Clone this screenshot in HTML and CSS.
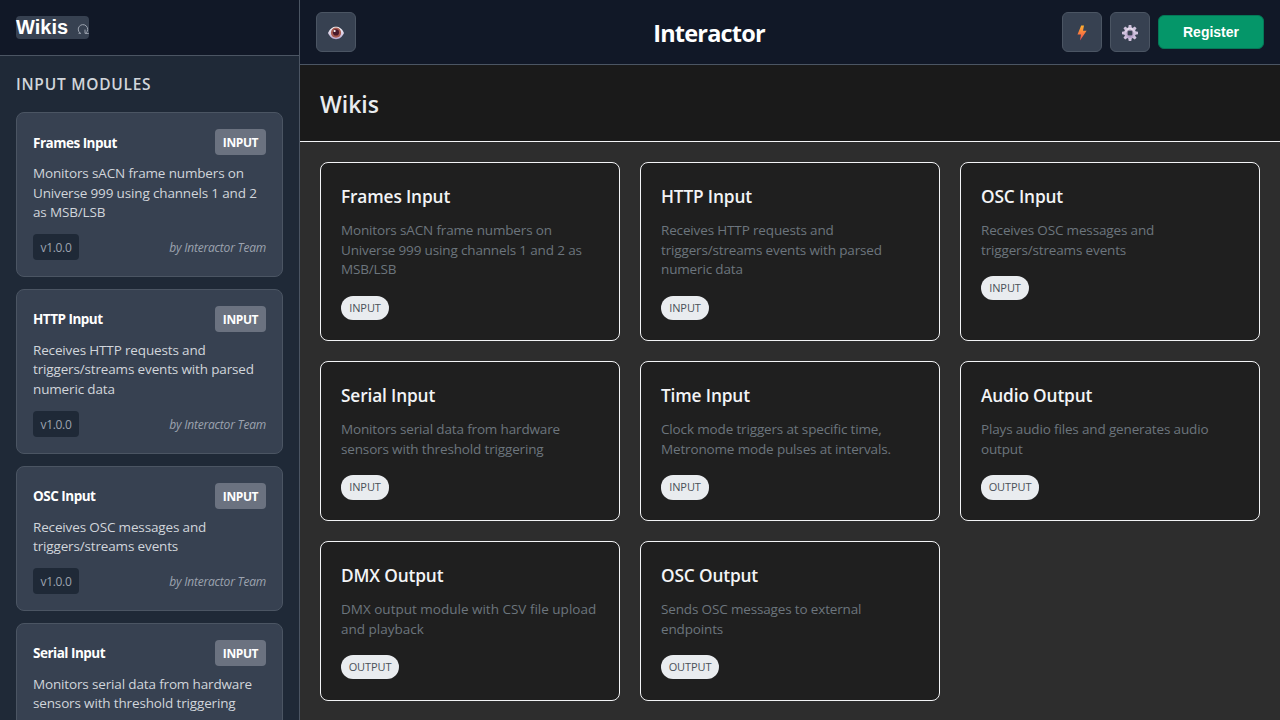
FILE: index.html
```html
<!DOCTYPE html>
<html lang="en">
<head>
<meta charset="utf-8">
<title>Interactor</title>
<link rel="stylesheet" href="styles.css">
</head>
<body>
<div class="app">
  <aside class="sidebar">
    <div class="sidebar-header">
      <button class="wiki-toggle">Wikis <svg class="reload" viewBox="0 0 12 12"><path d="M4 10.3H1.500M3.300 10.200A4.700 4.700 0 1 1 9 9.900M8 6.600V10.400H11.800"/></svg></button>
    </div>
    <div class="module-list">
      <h3 class="section-title">Input Modules</h3>
      <article class="module">
        <div class="module-top"><h4 class="module-name">Frames Input</h4><span class="module-type">INPUT</span></div>
        <p class="module-desc">Monitors sACN frame numbers on<br>Universe 999 using channels 1 and 2<br>as MSB/LSB</p>
        <div class="module-meta"><span class="version">v1.0.0</span><span class="author">by Interactor Team</span></div>
      </article>
      <article class="module">
        <div class="module-top"><h4 class="module-name">HTTP Input</h4><span class="module-type">INPUT</span></div>
        <p class="module-desc">Receives HTTP requests and<br>triggers/streams events with parsed<br>numeric data</p>
        <div class="module-meta"><span class="version">v1.0.0</span><span class="author">by Interactor Team</span></div>
      </article>
      <article class="module">
        <div class="module-top"><h4 class="module-name">OSC Input</h4><span class="module-type">INPUT</span></div>
        <p class="module-desc">Receives OSC messages and<br>triggers/streams events</p>
        <div class="module-meta"><span class="version">v1.0.0</span><span class="author">by Interactor Team</span></div>
      </article>
      <article class="module">
        <div class="module-top"><h4 class="module-name">Serial Input</h4><span class="module-type">INPUT</span></div>
        <p class="module-desc">Monitors serial data from hardware<br>sensors with threshold triggering</p>
      </article>
    </div>
  </aside>
  <main class="main">
    <header class="topbar">
      <div class="topbar-side">
        <button class="icon-button"><svg viewBox="0 0 16 16">
          <defs><linearGradient id="eye-white" x2="0" y2="1"><stop offset="0" stop-color="#fff"/><stop offset="1" stop-color="#b9a6cf"/></linearGradient></defs>
          <path fill="url(#eye-white)" d="M0 8C2 3.500 5 1.800 8 1.800S14 3.500 16 8C14 12.500 11 14.200 8 14.200S2 12.500 0 8Z"/>
          <circle cx="8" cy="7.700" r="5.100" fill="#a85b50"/><circle cx="8" cy="7.400" r="3.100" fill="#4a1a2c"/><circle cx="6.600" cy="6" r="1.100" fill="#fff"/></svg></button>
      </div>
      <h1 class="brand">Interactor</h1>
      <div class="topbar-side">
        <button class="icon-button"><svg viewBox="0 0 16 16">
          <defs><linearGradient id="bolt" x2="0" y2="1"><stop offset="0" stop-color="#ffb02e"/><stop offset="1" stop-color="#f5484f"/></linearGradient></defs>
          <path fill="url(#bolt)" d="M7.200.600H10L9 5.800H12.600L6 15.500L7 9.400H3.500Z"/></svg></button>
        <button class="icon-button"><svg viewBox="0 0 16 16">
          <defs><linearGradient id="gear" x2="0" y2="1"><stop offset="0" stop-color="#e8e0ee"/><stop offset="1" stop-color="#b7a3cc"/></linearGradient></defs>
          <circle cx="8" cy="8" r="4.200" stroke="url(#gear)" stroke-width="3.200" fill="none"/>
          <g fill="#cfc1dc"><path id="tooth" d="M6.700 0H9.300L9.800 3H6.200Z"/><use href="#tooth" transform="rotate(45 8 8)"/><use href="#tooth" transform="rotate(90 8 8)"/><use href="#tooth" transform="rotate(135 8 8)"/><use href="#tooth" transform="rotate(180 8 8)"/><use href="#tooth" transform="rotate(225 8 8)"/><use href="#tooth" transform="rotate(270 8 8)"/><use href="#tooth" transform="rotate(315 8 8)"/></g>
          <circle cx="8" cy="8" r="3" fill="none" stroke="#8d7c9d" stroke-width=".8"/></svg></button>
        <button class="register">Register</button>
      </div>
    </header>
    <div class="page-header"><h2 class="page-title">Wikis</h2></div>
    <section class="grid">
      <article class="card"><h3 class="card-title">Frames Input</h3><p class="card-desc">Monitors sACN frame numbers on<br>Universe 999 using channels 1 and 2 as<br>MSB/LSB</p><span class="pill">INPUT</span></article>
      <article class="card"><h3 class="card-title">HTTP Input</h3><p class="card-desc">Receives HTTP requests and<br>triggers/streams events with parsed<br>numeric data</p><span class="pill">INPUT</span></article>
      <article class="card"><h3 class="card-title">OSC Input</h3><p class="card-desc">Receives OSC messages and<br>triggers/streams events</p><span class="pill">INPUT</span></article>
      <article class="card"><h3 class="card-title">Serial Input</h3><p class="card-desc">Monitors serial data from hardware<br>sensors with threshold triggering</p><span class="pill">INPUT</span></article>
      <article class="card"><h3 class="card-title">Time Input</h3><p class="card-desc">Clock mode triggers at specific time,<br>Metronome mode pulses at intervals.</p><span class="pill">INPUT</span></article>
      <article class="card"><h3 class="card-title">Audio Output</h3><p class="card-desc">Plays audio files and generates audio<br>output</p><span class="pill pill-wide">OUTPUT</span></article>
      <article class="card"><h3 class="card-title">DMX Output</h3><p class="card-desc card-desc-loose">DMX output module with CSV file upload<br>and playback</p><span class="pill pill-wide">OUTPUT</span></article>
      <article class="card"><h3 class="card-title">OSC Output</h3><p class="card-desc">Sends OSC messages to external<br>endpoints</p><span class="pill pill-wide">OUTPUT</span></article>
    </section>
  </main>
</div>
</body>
</html>
```
FILE: styles.css
```css
* { box-sizing: border-box; margin: 0; padding: 0; }
body { font-family: "Segoe UI", "Open Sans", "Noto Sans", sans-serif; background: #2d2d2d; color: #fff; overflow: hidden; }
.app { display: flex; height: 720px; }
.sidebar { width: 300px; flex: none; display: flex; flex-direction: column; background: #1f2937; border-right: 1px solid #4b5563; }
.sidebar-header { flex: none; height: 56px; padding: 16px; background: #111827; border-bottom: 1px solid #4b5563; display: flex; }
.wiki-toggle { display: flex; align-items: center; width: 73px; height: 23px; border: 0; border-radius: 4px; background: #374151; color: #fff; font: bold 20px "Liberation Sans", Arial, sans-serif; white-space: nowrap; }
.reload { width: 12px; height: 12px; flex: none; margin: 3px 0 0 9px; fill: none; stroke: #9ca3af; stroke-width: 1; }
.module-list { flex: 1; min-height: 0; overflow-y: auto; scrollbar-width: none; padding: 16px; display: flex; flex-direction: column; gap: 12px; }
.section-title { flex: none; height: 28px; line-height: 25px; font-size: 15.500px; font-weight: 600; color: #d1d5db; text-transform: uppercase; letter-spacing: .75px; }
.module { flex: none; min-height: 119px; background: #374151; border: 1px solid #4b5563; border-radius: 8px; padding: 16px; }
.module-top, .module-meta { display: flex; align-items: center; justify-content: space-between; height: 26px; }
.module-top { margin-bottom: 9px; }
.module-name { font-size: 13.500px; font-weight: 700; line-height: 26px; letter-spacing: -.5px; padding-top: 1px; }
.module-type { width: 51px; height: 26px; line-height: 27px; text-align: center; background: #6b7280; border-radius: 4px; font-size: 12px; font-weight: 700; letter-spacing: -.4px; }
.module-desc { font-size: 13.500px; line-height: 19.600px; color: #d1d5db; letter-spacing: -.15px; margin-bottom: 11px; }
.version { width: 46px; height: 26px; line-height: 27px; text-align: center; background: #1f2937; color: #9ca3af; border-radius: 4px; font-size: 12px; letter-spacing: -.3px; }
.author { font-size: 12px; font-style: italic; color: #9ca3af; letter-spacing: -.2px; line-height: 26px; padding-top: 2px; }
.main { flex: 1; min-width: 0; }
.topbar { height: 65px; padding: 0 16px; display: flex; align-items: center; justify-content: space-between; background: #111827; border-bottom: 1px solid #4b5563; }
.topbar-side { display: flex; align-items: center; gap: 8px; }
.brand { font-size: 23.500px; font-weight: 700; line-height: 34px; letter-spacing: -.8px; margin-top: 2px; }
.icon-button { width: 40px; height: 40px; display: flex; align-items: center; justify-content: center; background: #374151; border: 1px solid #4b5563; border-radius: 6px; }
.icon-button svg { width: 16px; height: 16px; margin-top: 2px; }
.register { width: 106px; height: 34px; background: #059669; border: 1px solid #047857; border-radius: 6px; color: #fff; font: bold 14px "Liberation Sans", Arial, sans-serif; }
.page-header { height: 77px; padding: 20px; background: #1a1a1a; border-bottom: 1px solid #f3f4f6; }
.page-title { font-size: 23px; line-height: 39px; font-weight: 600; color: #e9ecef; letter-spacing: 0; }
.grid { display: grid; grid-template-columns: repeat(3, 1fr); gap: 20px; padding: 20px; }
.card { background: #1f1f1f; border: 1px solid #f3f4f6; border-radius: 8px; padding: 20px 20px 20.300px; }
.card-title { height: 38.160px; line-height: 27.500px; font-size: 17.300px; font-weight: 650; color: #f3f4f6; letter-spacing: -.15px; }
.card-desc { font-size: 13.500px; line-height: 19.600px; color: #6c757d; letter-spacing: -.15px; margin-bottom: 15.700px; }
.card-desc-loose { letter-spacing: 0; }
.pill { display: block; width: 48px; height: 24.400px; line-height: 24.400px; text-align: center; background: #e9ecef; color: #495057; border-radius: 12px; font-size: 11px; letter-spacing: -.1px; }
.pill-wide { width: 58px; }
```
